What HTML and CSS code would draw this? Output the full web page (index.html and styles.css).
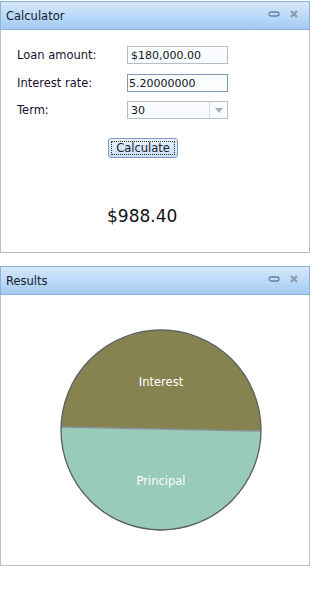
FILE: index.html
```html
<!DOCTYPE html>
<html>
<head>
<meta charset="utf-8">
<link rel="stylesheet" href="styles.css">
</head>
<body>
<div class="panel calc">
  <div class="titlebar">
    <span class="title">Calculator</span>
    <span class="tools">
      <svg width="12" height="8" viewBox="0 0 12 8"><rect x="1" y="2" width="10" height="4" rx="2" fill="none" stroke="#6a7f96" stroke-width="1.3"/></svg>
      <svg width="10" height="10" viewBox="0 0 10 10"><path d="M2 2 L8 8 M8 2 L2 8" stroke="#8b9bad" stroke-width="2.2"/></svg>
    </span>
  </div>
  <div class="body">
    <div class="form">
      <div class="row"><span class="label">Loan amount:</span><span class="field">$180,000.00</span></div>
      <div class="row"><span class="label">Interest rate:</span><span class="field focus">5.20000000</span></div>
      <div class="row"><span class="label">Term:</span><span class="field select"><span class="val">30</span><span class="arrow"><svg width="8" height="5" viewBox="0 0 8 5"><path d="M0 0 L8 0 L4 5 Z" fill="#9fb3c8"/></svg></span></span></div>
    </div>
    <div class="btnrow"><span class="btn"><span class="btninner">Calculate</span></span></div>
    <div class="result">$988.40</div>
  </div>
</div>
<div class="panel results">
  <div class="titlebar">
    <span class="title">Results</span>
    <span class="tools">
      <svg width="12" height="8" viewBox="0 0 12 8"><rect x="1" y="2" width="10" height="4" rx="2" fill="none" stroke="#6a7f96" stroke-width="1.3"/></svg>
      <svg width="10" height="10" viewBox="0 0 10 10"><path d="M2 2 L8 8 M8 2 L2 8" stroke="#8b9bad" stroke-width="2.2"/></svg>
    </span>
  </div>
  <div class="body chartbody">
    <svg class="pie" width="308" height="268" viewBox="1 295 308 268">
      <path d="M61.05 427 A100 100 0 0 1 260.99 431 Z" fill="#878350"/>
      <path d="M260.99 431 A100 100 0 1 1 61.05 427 Z" fill="#99cbb9"/>
      <line x1="61.05" y1="427" x2="260.99" y2="431" stroke="#8a9098" stroke-width="1.5"/>
      <circle cx="161" cy="430" r="100" fill="none" stroke="#5a5e5e" stroke-width="1.3"/>
      <text x="161" y="386" class="pielabel">Interest</text>
      <text x="161" y="485" class="pielabel">Principal</text>
    </svg>
  </div>
</div>
</body>
</html>
```
FILE: styles.css
```css
html, body {
  margin: 0;
  padding: 0;
  background: #ffffff;
}
body {
  font-family: "DejaVu Sans", Verdana, sans-serif;
  font-size: 11px;
  color: #1a1a1a;
  padding-top: 1px;
}
.panel {
  width: 310px;
}
.results {
  margin-top: 13px;
}
.titlebar {
  box-sizing: border-box;
  height: 29px;
  border: 1px solid #8eb1d6;
  background: linear-gradient(#d6e8fb, #b9d9f8 55%, #a3cbf2);
  display: flex;
  align-items: center;
  justify-content: space-between;
  padding: 0 10px 0 5px;
}
.title {
  font-size: 11.5px;
  color: #15202c;
  margin-top: 1px;
}
.tools {
  display: flex;
  align-items: center;
  gap: 9px;
  margin-top: -3px;
}
.body {
  box-sizing: border-box;
  border: 1px solid #b9c0c9;
  border-top: none;
  height: 223px;
}
.chartbody {
  height: 271px;
}
.form {
  padding: 16px 0 0 16px;
  display: flex;
  flex-direction: column;
  gap: 10px;
}
.row {
  display: flex;
  align-items: center;
  height: 18px;
}
.row:nth-child(3) { margin-top: -1px; }
.label {
  width: 110px;
  font-size: 11.5px;
  color: #1c1030;
}
.field {
  box-sizing: border-box;
  width: 101px;
  height: 18px;
  border: 1px solid #b4bfcb;
  background: #f9fbfe;
  padding: 0 3px;
  display: flex;
  align-items: center;
  color: #101820;
}
.field.focus {
  border-color: #7e9ab6;
  background: #fbfcfe;
  padding-left: 1px;
}
.field.select {
  padding: 0 0 0 3px;
  justify-content: space-between;
}
.arrow {
  width: 17px;
  height: 16px;
  border-left: 1px solid #d8dfe7;
  display: flex;
  align-items: center;
  justify-content: center;
}
.btnrow {
  padding: 19px 0 0 107px;
}
.btn {
  display: inline-block;
  box-sizing: border-box;
  width: 70px;
  height: 20px;
  border: 1px solid #7f9dbf;
  border-radius: 3px;
  background: linear-gradient(#e8f2fc, #c9def3);
  padding: 2px;
}
.btninner {
  display: flex;
  align-items: center;
  justify-content: center;
  box-sizing: border-box;
  height: 14px;
  border: 1px dotted #333;
  font-size: 11.5px;
  color: #15202c;
}
.result {
  padding: 48px 0 0 106px;
  font-size: 17px;
  color: #111;
}
.pie {
  display: block;
}
.pielabel {
  fill: #ffffff;
  font-family: "DejaVu Sans", Verdana, sans-serif;
  font-size: 11.5px;
  text-anchor: middle;
}
```
